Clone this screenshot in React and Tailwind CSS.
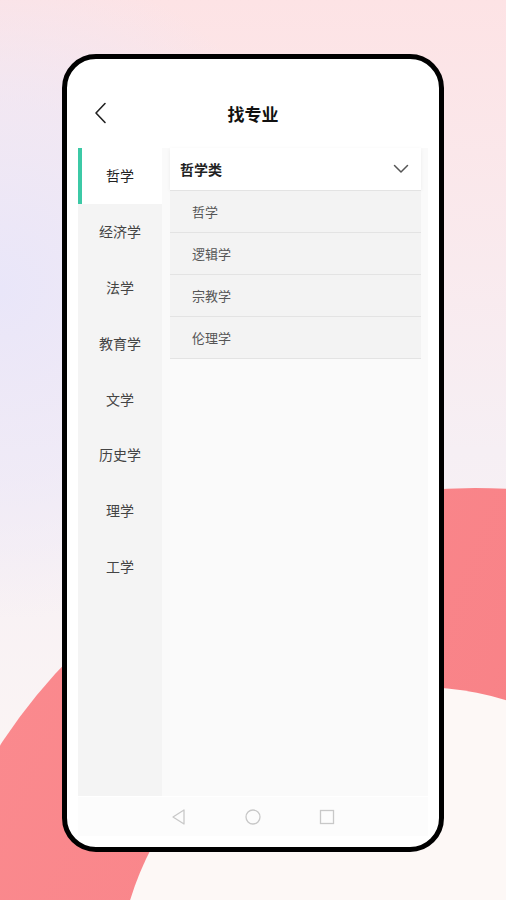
import React from "react";

const majors = ["哲学", "经济学", "法学", "教育学", "文学", "历史学", "理学", "工学"];
const subs = ["哲学", "逻辑学", "宗教学", "伦理学"];

export default function App() {
  return (
    <div
      className="relative w-[506px] h-[900px] overflow-hidden bg-gradient-to-b from-[#fde3e5] via-[#f6eff4] to-[#fdf7f4]"
      style={{ fontFamily: '"Noto Sans CJK SC", "Noto Sans", sans-serif' }}
    >
      <svg className="absolute inset-0" width="506" height="900" viewBox="0 0 506 900">
        <defs>
          <radialGradient id="lav" cx="0" cy="290" r="330" gradientUnits="userSpaceOnUse">
            <stop offset="0" stopColor="#e9e6f9" stopOpacity="1" />
            <stop offset="0.6" stopColor="#ece8f8" stopOpacity="0.6" />
            <stop offset="1" stopColor="#ece8f8" stopOpacity="0" />
          </radialGradient>
          <linearGradient id="coral" x1="0" y1="0" x2="1" y2="0.4">
            <stop offset="0" stopColor="#fb8c90" />
            <stop offset="1" stopColor="#f67a80" />
          </linearGradient>
        </defs>
        <rect x="0" y="0" width="506" height="900" fill="url(#lav)" />
        <circle cx="475" cy="1055" r="567" fill="url(#coral)" />
        <circle cx="418" cy="988" r="301" fill="#fdf8f6" />
      </svg>

      <div className="relative pt-[54px] pl-[62px]">
        <div className="w-[382px] h-[798px] border-[5px] border-black rounded-[34px] bg-white flex flex-col overflow-hidden">
          {/* header */}
          <div className="h-[89px] flex items-center relative shrink-0">
            <svg className="absolute left-[27px] top-[43px]" width="14" height="22" viewBox="0 0 14 22">
              <path d="M11 1.5 L2 11 L11 20.5" fill="none" stroke="#222" strokeWidth="1.6" strokeLinecap="round" strokeLinejoin="round" />
            </svg>
            <div className="w-full text-center text-[17px] font-bold text-[#111] pt-[20px] leading-none">找专业</div>
          </div>

          {/* body */}
          <div className="flex-1 px-[11px] flex flex-col">
            <div className="flex h-[648px]">
              <div className="w-[84px] bg-[#f4f4f4] flex flex-col">
                {majors.map((m, i) => (
                  <div
                    key={m}
                    className={
                      "h-[55.8px] flex items-center justify-center text-[14px] relative " +
                      (i === 0 ? "bg-white text-[#222]" : "text-[#444]")
                    }
                  >
                    {i === 0 && <div className="absolute left-0 top-0 bottom-0 w-[4px] bg-[#3cc9a6]" />}
                    {m}
                  </div>
                ))}
              </div>
              <div className="flex-1 bg-[#fafafa] pl-[8px] pr-[7px]">
                <div className="bg-white h-[42px] flex items-center justify-between pl-[10px] pr-[12px] shadow-[0_1px_4px_rgba(0,0,0,0.06)]">
                  <span className="text-[14px] font-bold text-[#222]">哲学类</span>
                  <svg width="16" height="10" viewBox="0 0 16 10">
                    <path d="M1.5 1.5 L8 8 L14.5 1.5" fill="none" stroke="#555" strokeWidth="1.5" strokeLinecap="round" strokeLinejoin="round" />
                  </svg>
                </div>
                {subs.map((s) => (
                  <div
                    key={s}
                    className="h-[42px] bg-[#f3f3f3] border-t border-[#e3e3e3] flex items-center pl-[22px] text-[13px] text-[#555]"
                  >
                    {s}
                  </div>
                ))}
                <div className="border-t border-[#e3e3e3]" />
              </div>
            </div>
            {/* nav bar */}
            <div className="h-[39px] bg-[#fcfcfc] flex items-center justify-center gap-[54px] mt-[1px]">
              <svg width="20" height="20" viewBox="0 0 20 20">
                <path d="M15 3 L4 10 L15 17 Z" fill="none" stroke="#c8c8c8" strokeWidth="1.3" strokeLinejoin="round" />
              </svg>
              <svg width="20" height="20" viewBox="0 0 20 20">
                <circle cx="10" cy="10" r="7" fill="none" stroke="#c8c8c8" strokeWidth="1.3" />
              </svg>
              <svg width="20" height="20" viewBox="0 0 20 20">
                <rect x="3.5" y="3.5" width="13" height="13" fill="none" stroke="#c8c8c8" strokeWidth="1.3" />
              </svg>
            </div>
          </div>
        </div>
      </div>
    </div>
  );
}
